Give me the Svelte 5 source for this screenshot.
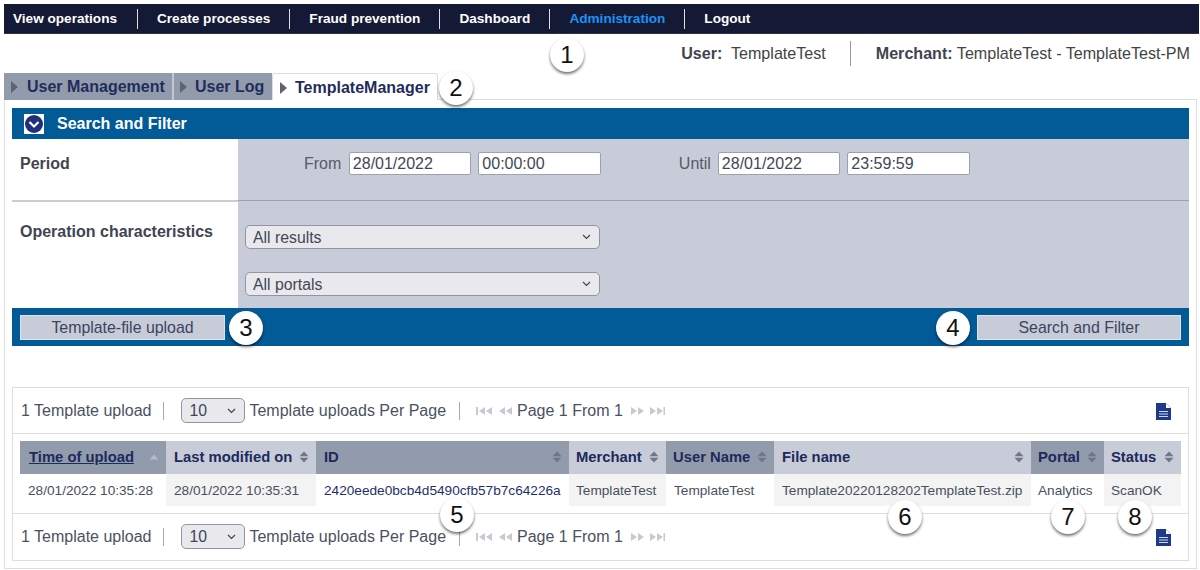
<script>
  const navItems = ['View operations', 'Create processes', 'Fraud prevention', 'Dashboard', 'Administration', 'Logout'];
  const cols = [
    { label: 'Time of upload', w: 146, value: '28/01/2022 10:35:28', active: true },
    { label: 'Last modified on', w: 150, value: '28/01/2022 10:35:31' },
    { label: 'ID', w: 253, value: '2420eede0bcb4d5490cfb57b7c64226a', link: true },
    { label: 'Merchant', w: 97, value: 'TemplateTest' },
    { label: 'User Name', w: 108, value: 'TemplateTest' },
    { label: 'File name', w: 257, value: 'Template20220128202TemplateTest.zip' },
    { label: 'Portal', w: 73, value: 'Analytics' },
    { label: 'Status', w: 77, value: 'ScanOK' }
  ];
  const badges = [
    { n: 1, x: 567, y: 55 }, { n: 2, x: 456, y: 88 }, { n: 3, x: 246, y: 328 }, { n: 4, x: 953, y: 328 },
    { n: 5, x: 457, y: 515 }, { n: 6, x: 905, y: 517 }, { n: 7, x: 1068, y: 517 }, { n: 8, x: 1135, y: 517 }
  ];
</script>

{#snippet sel(label, cls)}
  <span class="selwrap {cls}">
    <select><option>{label}</option></select>
    <svg class="arrow" width="9" height="6" viewBox="0 0 9 6"><path d="M1 1l3.500 3.500L8 1" fill="none" stroke="#444" stroke-width="1.200"/></svg>
  </span>
{/snippet}

{#snippet pager(pos)}
  <div class="pager {pos}">
    <span class="count">1 Template upload</span>
    <i class="vsep s1"></i>
    {@render sel('10', 'per')}
    <span class="perlabel">Template uploads Per Page</span>
    <i class="vsep s2"></i>
    <svg class="pg" width="36" height="10" viewBox="0 0 36 10">
      <rect x="0" y="1" width="2" height="8"/><path d="M9 1v8L3 5zM16 1v8L10 5zM29 1v8L23 5zM36 1v8L30 5z"/>
    </svg>
    <span class="pagetext">Page 1 From 1</span>
    <svg class="pg" width="34" height="10" viewBox="0 0 34 10">
      <path d="M0 1v8l6-4zM7 1v8l6-4zM19 1v8l6-4zM26 1v8l6-4z"/><rect x="32.500" y="1" width="1.500" height="8"/>
    </svg>
    <svg class="doc" width="15" height="17" viewBox="0 0 15 17">
      <path d="M0 0h10l5 5v12H0z" fill="#1f3a8a"/><path d="M10 0v5h5z" fill="#fff"/><path d="M3 8.500h9M3 11h9M3 13.500h9" stroke="#cfd6ea" stroke-width="1"/>
    </svg>
  </div>
{/snippet}

<div class="page">
  <nav class="nav">
    {#each navItems as item, i}
      <span class="navitem" class:active={item === 'Administration'} class:first={i === 0}>{item}</span>
    {/each}
  </nav>

  <div class="userbar">
    <span class="u"><b>User:</b>&nbsp; TemplateTest</span>
    <i class="usep"></i>
    <span class="m"><b>Merchant:</b> TemplateTest - TemplateTest-PM</span>
  </div>

  <div class="tabs">
    <div class="tab t1"><i class="tri"></i>User Management</div>
    <div class="tab t2"><i class="tri"></i>User Log</div>
    <div class="tab cur"><i class="tri"></i>TemplateManager</div>
  </div>

  <div class="panel">
    <div class="sf-head">
      <span class="chev">
        <svg width="20" height="20" viewBox="0 0 20 20">
          <rect width="20" height="20" fill="#fff"/><circle cx="10" cy="10" r="9" fill="#1f2f7c"/>
          <path d="M5.500 8l4.500 4.500L14.500 8" fill="none" stroke="#fff" stroke-width="2.200"/>
        </svg>
      </span>
      <span class="sf-title">Search and Filter</span>
    </div>

    <div class="frow period">
      <div class="flabel">Period</div>
      <div class="fbody dates">
        <span class="dl from">From</span>
        <input value="28/01/2022" />
        <input value="00:00:00" />
        <span class="dl until">Until</span>
        <input value="28/01/2022" />
        <input value="23:59:59" />
      </div>
    </div>
    <div class="frow oper">
      <div class="flabel">Operation characteristics</div>
      <div class="fbody sels">
        {@render sel('All results', 'wide')}
        {@render sel('All portals', 'wide')}
      </div>
    </div>

    <div class="actions">
      <button>Template-file upload</button>
      <button class="right">Search and Filter</button>
    </div>

    <div class="results">
      {@render pager('top')}
      <div class="tablewrap">
        <table>
          <colgroup>
            {#each cols as c}<col style="width:{c.w}px" />{/each}
          </colgroup>
          <thead>
            <tr>
              {#each cols as c}
                <th>
                  <div class="th">
                    <span class:cur-sort={c.active}>{c.label}</span>
                    <svg width="10" height="12" viewBox="0 0 10 12">
                      {#if c.active}
                        <path d="M0.500 8.500l4.500-5 4.500 5z" fill="#b5bbc7"/>
                      {:else}
                        <path d="M0.500 5.300l4.500-4.800 4.500 4.800zM0.500 6.700l4.500 4.800 4.500-4.800z" fill="#6f7787"/>
                      {/if}
                    </svg>
                  </div>
                </th>
              {/each}
            </tr>
          </thead>
          <tbody>
            <tr>
              {#each cols as c}
                <td class:link={c.link}>{c.value}</td>
              {/each}
            </tr>
          </tbody>
        </table>
      </div>
      {@render pager('bottom')}
    </div>
  </div>

  {#each badges as b}
    <span class="badge" style="left:{b.x - 17}px;top:{b.y - 17}px">{b.n}</span>
  {/each}
</div>

<style>
  :global(body) { margin: 0; background: #fff; }
  .page {
    position: relative;
    width: 1200px;
    height: 570px;
    overflow: hidden;
    box-sizing: border-box;
    padding: 4px 3px 0 4px;
    font-family: "Liberation Sans", Arial, sans-serif;
    color: #3f4756;
  }
  .nav {
    display: flex;
    align-items: center;
    height: 29px;
    background: #141a36;
    margin-right: -2px;
    border-bottom: 1px solid #2c3348;
    box-sizing: content-box;
  }
  .navitem {
    font-size: 13.6px;
    font-weight: 700;
    color: #fff;
    line-height: 20px;
    padding: 0 19px;
    border-left: 1px solid #e0e0e0;
  }
  .navitem.first { border-left: 0; padding: 0 20px 0 9px; }
  .navitem.active { color: #1b93f5; }
  .userbar {
    display: flex;
    justify-content: flex-end;
    align-items: center;
    height: 39px;
    padding-right: 7px;
    font-size: 16.1px;
    color: #444;
  }
  .userbar b { color: #3f4450; }
  .usep { width: 1px; height: 25px; background: #999; margin: 0 24.5px; }
  .tabs { display: flex; height: 27px; margin-bottom: -1px; position: relative; z-index: 1; }
  .tab {
    display: flex;
    align-items: center;
    box-sizing: border-box;
    font-size: 16px;
    font-weight: 700;
    background: #929bab;
    color: #1f2d5c;
    border-right: 2px solid #c3c7d0;
    padding: 1px 0 0 7px;
  }
  .t1 { width: 170px; }
  .t2 { width: 98px; padding-left: 6px; border-right: 0; }
  .t2 .tri { margin-right: 8px; }
  .tab.cur {
    width: 166px;
    background: #fff;
    border: 1px solid #ddd;
    border-bottom: 0;
    border-radius: 3px 3px 0 0;
  }
  .tri {
    width: 0; height: 0;
    border-left: 7px solid #5e6570;
    border-top: 6px solid transparent;
    border-bottom: 6px solid transparent;
    margin-right: 9px;
  }
  .cur .tri { margin-right: 8px; }
  .panel {
    box-sizing: border-box;
    height: 470px;
    border: 1px solid #ddd;
    padding: 8px 7px;
  }
  .sf-head {
    display: flex;
    align-items: center;
    height: 31px;
    background: #025a96;
    color: #fff;
    font-size: 16px;
    font-weight: 700;
    padding-left: 12px;
  }
  .sf-title { padding-top: 1px; }
  .chev { display: flex; margin-right: 13px; }
  .frow { display: flex; }
  .flabel {
    width: 226px;
    flex: none;
    box-sizing: border-box;
    padding-left: 8px;
    font-size: 16px;
    font-weight: 700;
    color: #3f4450;
  }
  .fbody { flex: 1; background: #c8ccd8; }
  .period { height: 61px; }
  .period .flabel { padding-top: 16px; }
  .oper { height: 108px; border-top: 2px solid #c8ccd8; box-sizing: border-box; }
  .oper .flabel { padding-top: 21px; }
  .period .fbody { border-bottom: 1px solid #9aa2b2; margin-bottom: -1px; }
  .dates { display: flex; align-items: flex-start; padding-top: 13px; box-sizing: border-box; }
  .dl { font-size: 16px; line-height: 24px; color: #555b68; }
  .from { margin-left: 66px; margin-right: 7.500px; }
  .until { margin-left: 71px; margin-right: 7px; }
  input {
    box-sizing: border-box;
    width: 122.500px;
    height: 23px;
    margin-right: 7px;
    padding: 0 3px;
    border: 1px solid #9ba1ad;
    border-radius: 2px;
    background: #fff;
    font: 16px "Liberation Sans", Arial, sans-serif;
    color: #3f4756;
    outline: 0;
  }
  .sels { display: flex; flex-direction: column; align-items: flex-start; gap: 23px; padding: 23px 0 0 7px; box-sizing: border-box; }
  .selwrap { position: relative; display: inline-flex; flex: none; }
  .arrow { position: absolute; top: 50%; right: 9px; margin-top: -3px; pointer-events: none; }
  select {
    box-sizing: border-box;
    width: 100%;
    height: 100%;
    appearance: none;
    border: 1px solid #8f95a3;
    border-radius: 5px;
    background-color: #e9e9ed;
    padding: 0 0 0 7px;
    font: 15.800px "Liberation Sans", Arial, sans-serif;
    color: #3f4756;
  }
  .selwrap.wide { width: 355px; height: 24px; }
  .selwrap.per { width: 64px; height: 25px; margin-right: 4px; }
  .actions {
    display: flex;
    justify-content: space-between;
    align-items: center;
    height: 38px;
    background: #025a96;
    padding: 1px 8px 0;
    box-sizing: border-box;
  }
  button {
    box-sizing: border-box;
    width: 205px;
    height: 25px;
    padding: 0;
    border: 1px solid #dfe2e8;
    border-radius: 0;
    background: #c8ccd8;
    color: #3a4560;
    font: 15.900px "Liberation Sans", Arial, sans-serif;
  }
  button.right { width: 204px; }
  .results {
    margin-top: 41px;
    box-sizing: border-box;
    height: 174px;
    border: 1px solid #ddd;
  }
  .pager {
    display: flex;
    align-items: center;
    height: 45px;
    padding-left: 8px;
    font-size: 16px;
    color: #4a5260;
  }
  .pager.top { border-bottom: 1px solid #ddd; }
  .pager.bottom { border-top: 1px solid #ddd; }
  .vsep { width: 1px; height: 18px; background: #aaa; }
  .s1 { margin: 0 17px 0 12px; }
  .s2 { margin: 0 16px 0 13px; }
  .pg { fill: #c6cad2; }
  .pagetext { margin: 0 8px 0 5px; }
  .doc { margin: 2px 17px 0 auto; }
  .tablewrap { padding: 7px; }
  table { border-collapse: collapse; table-layout: fixed; width: 1161px; }
  th { padding: 0; height: 33px; background: #c8ccd8; text-align: left; }
  th:nth-child(odd) { background: #929bab; }
  .th {
    display: flex;
    align-items: center;
    justify-content: space-between;
    padding: 0 7px 1px 8px;
    font-size: 14.800px;
    font-weight: 700;
    color: #1c2a5c;
  }
  th:first-child .th { padding-left: 9px; }
  th:nth-child(4) .th, th:nth-child(5) .th, th:nth-child(7) .th, th:nth-child(8) .th { padding-left: 7px; }
  .cur-sort { text-decoration: underline; }
  td {
    height: 32px;
    padding: 0 0 0 8px;
    font-size: 13.650px;
    color: #48505e;
    white-space: nowrap;
    overflow: hidden;
  }
  td:nth-child(4), td:nth-child(7), td:nth-child(8) { padding-left: 7px; }
  td:nth-child(even) { background: #f3f3f3; }
  td.link { color: #1f2f6c; }
  .badge {
    position: absolute;
    z-index: 2;
    width: 34px;
    height: 34px;
    border-radius: 50%;
    background: #fff;
    box-shadow: 0 2px 3px rgba(0, 0, 0, .55);
    display: flex;
    align-items: center;
    justify-content: center;
    font-size: 24px;
    color: #111;
  }
</style>
